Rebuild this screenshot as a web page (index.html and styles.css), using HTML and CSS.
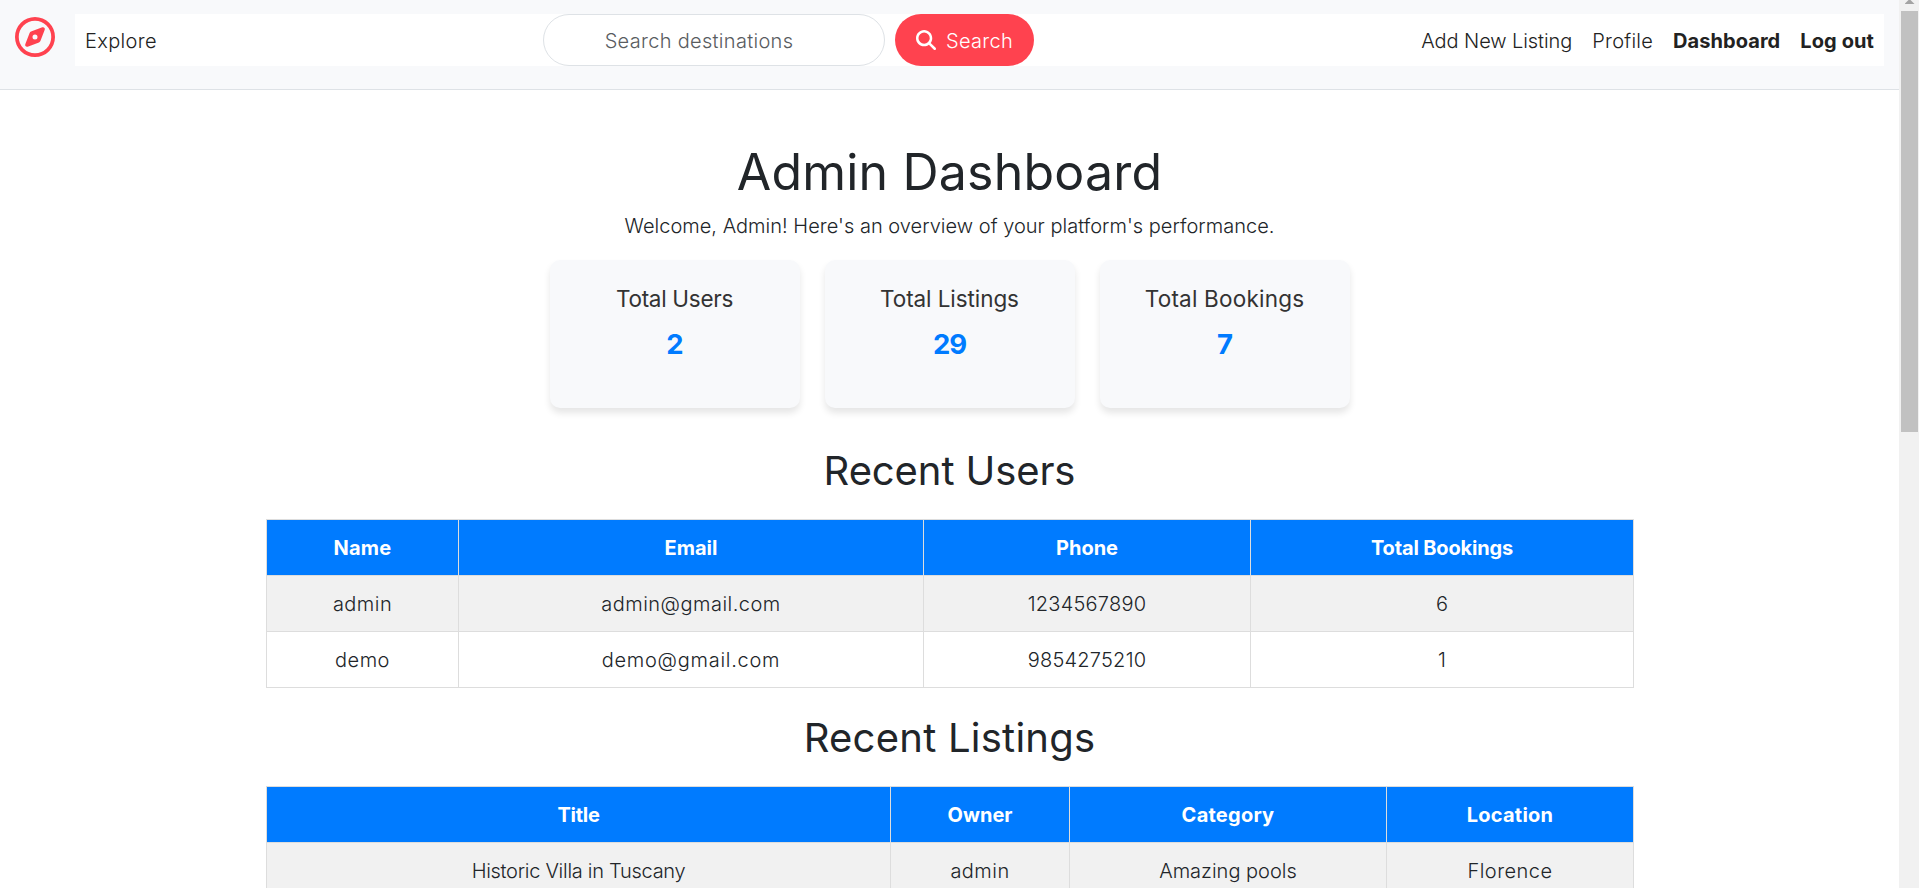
FILE: index.html
```
<!DOCTYPE html>
<html lang="en">
<head>
<meta charset="utf-8">
<title>Admin Dashboard</title>
<link rel="stylesheet" href="styles.css">
</head>
<body>
<div class="page">
  <header class="navbar">
    <a class="brand" href="#" aria-label="Home">
      <svg viewBox="0 0 512 512" width="40" height="40" fill="currentColor"><path d="M464 256A208 208 0 1 0 48 256a208 208 0 1 0 416 0zM0 256a256 256 0 1 1 512 0A256 256 0 1 1 0 256zm306.7 69.1L162.4 380.6c-19.4 7.5-38.5-11.6-31-31l55.5-144.3c3.3-8.5 9.9-15.1 18.4-18.4l144.3-55.5c19.4-7.5 38.5 11.6 31 31L325.1 306.7c-3.2 8.5-9.9 15.1-18.4 18.4zM288 256a32 32 0 1 0 -64 0 32 32 0 1 0 64 0z"/></svg>
    </a>
    <nav class="menu">
      <a class="link explore" href="#">Explore</a>
      <form class="search">
        <input class="search-input" type="text" placeholder="Search destinations">
        <button class="search-btn" type="button">
          <svg viewBox="0 0 512 512" width="20" height="20" fill="currentColor"><path d="M416 208c0 45.9-14.9 88.3-40 122.7L502.6 457.4c12.5 12.5 12.5 32.8 0 45.3s-32.8 12.5-45.3 0L330.7 376c-34.4 25.2-76.8 40-122.7 40C93.1 416 0 322.9 0 208S93.1 0 208 0S416 93.1 416 208zM208 352a144 144 0 1 0 0-288 144 144 0 1 0 0 288z"/></svg>
          <span>Search</span>
        </button>
      </form>
      <div class="account">
        <a class="link add" href="#">Add New Listing</a>
        <a class="link profile" href="#">Profile</a>
        <a class="link strong" href="#">Dashboard</a>
        <a class="link strong logout" href="#">Log out</a>
      </div>
    </nav>
  </header>
  <main class="dashboard">
    <h1 class="title">Admin Dashboard</h1>
    <p class="welcome">Welcome, Admin! Here's an overview of your platform's performance.</p>
    <section class="stats">
      <div class="stat"><h3 class="stat-name users">Total Users</h3><p class="stat-value">2</p></div>
      <div class="stat"><h3 class="stat-name listings">Total Listings</h3><p class="stat-value">29</p></div>
      <div class="stat"><h3 class="stat-name bookings">Total Bookings</h3><p class="stat-value">7</p></div>
    </section>
    <h2 class="heading">Recent Users</h2>
    <table class="table">
      <colgroup><col class="u1"><col class="u2"><col class="u3"><col class="u4"></colgroup>
      <thead><tr><th class="wide">Name</th><th>Email</th><th>Phone</th><th class="narrow">Total Bookings</th></tr></thead>
      <tbody>
        <tr><td class="name">admin</td><td class="email">admin@gmail.com</td><td class="digits">1234567890</td><td>6</td></tr>
        <tr><td class="name">demo</td><td class="email demo">demo@gmail.com</td><td class="digits">9854275210</td><td>1</td></tr>
      </tbody>
    </table>
    <h2 class="heading loose">Recent Listings</h2>
    <table class="table">
      <colgroup><col class="l1"><col class="l2"><col class="l3"><col class="l4"></colgroup>
      <thead><tr><th class="tight">Title</th><th>Owner</th><th class="wide">Category</th><th class="wide">Location</th></tr></thead>
      <tbody>
        <tr><td class="tight">Historic Villa in Tuscany</td><td class="name">admin</td><td>Amazing pools</td><td class="name">Florence</td></tr>
      </tbody>
    </table>
  </main>
</div>
<div class="scrollbar"><div class="arrow"></div><div class="thumb"></div></div>
</body>
</html>
```
FILE: styles.css
```
* { box-sizing: border-box; }

body {
  margin: 0;
  height: 888px;
  display: flex;
  overflow: hidden;
  background: #fff;
  color: #212529;
  font: 300 20px/30px Inter, "Liberation Sans", sans-serif;
}

h1, h2, h3, p { margin: 0; }

.page { flex: 1; min-width: 0; overflow: hidden; }

/* Navigation bar */
.navbar {
  display: flex;
  align-items: flex-start;
  height: 90px;
  padding: 14px 15px 0;
  background: #f8f9fb;
  border-bottom: 1px solid #dee2e6;
}
.brand { width: 60px; padding-top: 3px; color: #ff424f; }
.brand svg { display: block; }
.menu {
  flex: 1;
  display: grid;
  grid-template-columns: 468px 1fr auto;
  align-items: center;
  height: 52px;
  padding-right: 10px;
  background: #fff;
}
.link {
  color: #222;
  text-decoration: none;
  padding-top: 1px;
  white-space: nowrap;
}
.explore { padding-left: 10px; letter-spacing: .34px; }
.search { display: flex; gap: 10px; height: 52px; }
.search-input {
  width: 342px;
  padding: 2px 30px 0 0;
  border: 1px solid #dee2e6;
  border-radius: 26px;
  background: #fff;
  font: inherit;
  text-align: center;
  letter-spacing: .31px;
}
.search-input::placeholder { color: #595c5f; opacity: 1; }
.search-btn {
  display: flex;
  align-items: center;
  gap: 10px;
  width: 139px;
  padding: 0 0 0 21px;
  border: 0;
  border-radius: 26px;
  background: #ff424f;
  color: #fff;
  font: inherit;
  letter-spacing: .31px;
}
.search-btn span { padding-top: 1px; }
.account { display: flex; gap: 20px; }
.add { letter-spacing: -.08px; }
.profile { letter-spacing: .25px; }
.strong { font-weight: 700; letter-spacing: .06px; }
.logout { letter-spacing: .1px; }

/* Overview */
.dashboard {
  display: flex;
  flex-direction: column;
  align-items: center;
  padding-top: 52px;
  text-align: center;
}
.title { font-size: 50px; font-weight: 430; line-height: 60px; letter-spacing: .2px; }
.welcome { margin-top: 9px; letter-spacing: .02px; }
.stats { display: flex; gap: 25px; margin-top: 19px; }
.stat {
  width: 250px;
  height: 148px;
  padding-top: 25px;
  border-radius: 10px;
  background: #f8f9fb;
  box-shadow: 0 5px 7.5px rgba(0, 0, 0, .1);
}
.stat-name { font-size: 22.5px; font-weight: 400; line-height: 27px; color: #333; }
.users { letter-spacing: -.3px; }
.listings { letter-spacing: -.08px; }
.bookings { letter-spacing: .21px; }
.stat-value {
  margin-top: 12px;
  font-size: 27.5px;
  font-weight: 700;
  line-height: 41px;
  letter-spacing: -1px;
  color: #007bff;
}

/* Tables */
.heading {
  margin-top: 39px;
  margin-bottom: 24px;
  font-size: 40px;
  font-weight: 400;
  line-height: 48px;
  letter-spacing: -.1px;
}
.loose { margin-top: 26px; letter-spacing: .24px; }
.table { width: 1368px; table-layout: fixed; border-collapse: collapse; }
.table th, .table td { height: 56px; padding: 0 0 0 1px; border: 1px solid #ddd; }
.table th { background: #007bff; color: #fff; font-weight: 700; }
.table tbody tr:nth-child(odd) { background: #f1f1f1; }
.u1 { width: 192px; }
.u2 { width: 465px; }
.u3 { width: 327px; }
.u4 { width: 383px; }
.l1 { width: 624px; }
.l2 { width: 179px; }
.l3 { width: 317px; }
.l4 { width: 247px; }
.wide { letter-spacing: .24px; }
.narrow { letter-spacing: -.16px; }
.tight { letter-spacing: -.28px; }
.name { letter-spacing: .46px; }
.email { letter-spacing: .48px; }
.demo { letter-spacing: .72px; }
.digits { letter-spacing: .23px; }

/* Scroll bar */
.scrollbar { width: 20px; padding: 0 1px 0 2px; background: #f1f1f1; }
.arrow {
  width: 10px;
  height: 4px;
  margin: 0 auto 7px;
  background: #a3a3a3;
  clip-path: polygon(40% 0, 60% 0, 100% 100%, 0 100%);
}
.thumb { height: 421px; background: #c1c1c1; }
```
